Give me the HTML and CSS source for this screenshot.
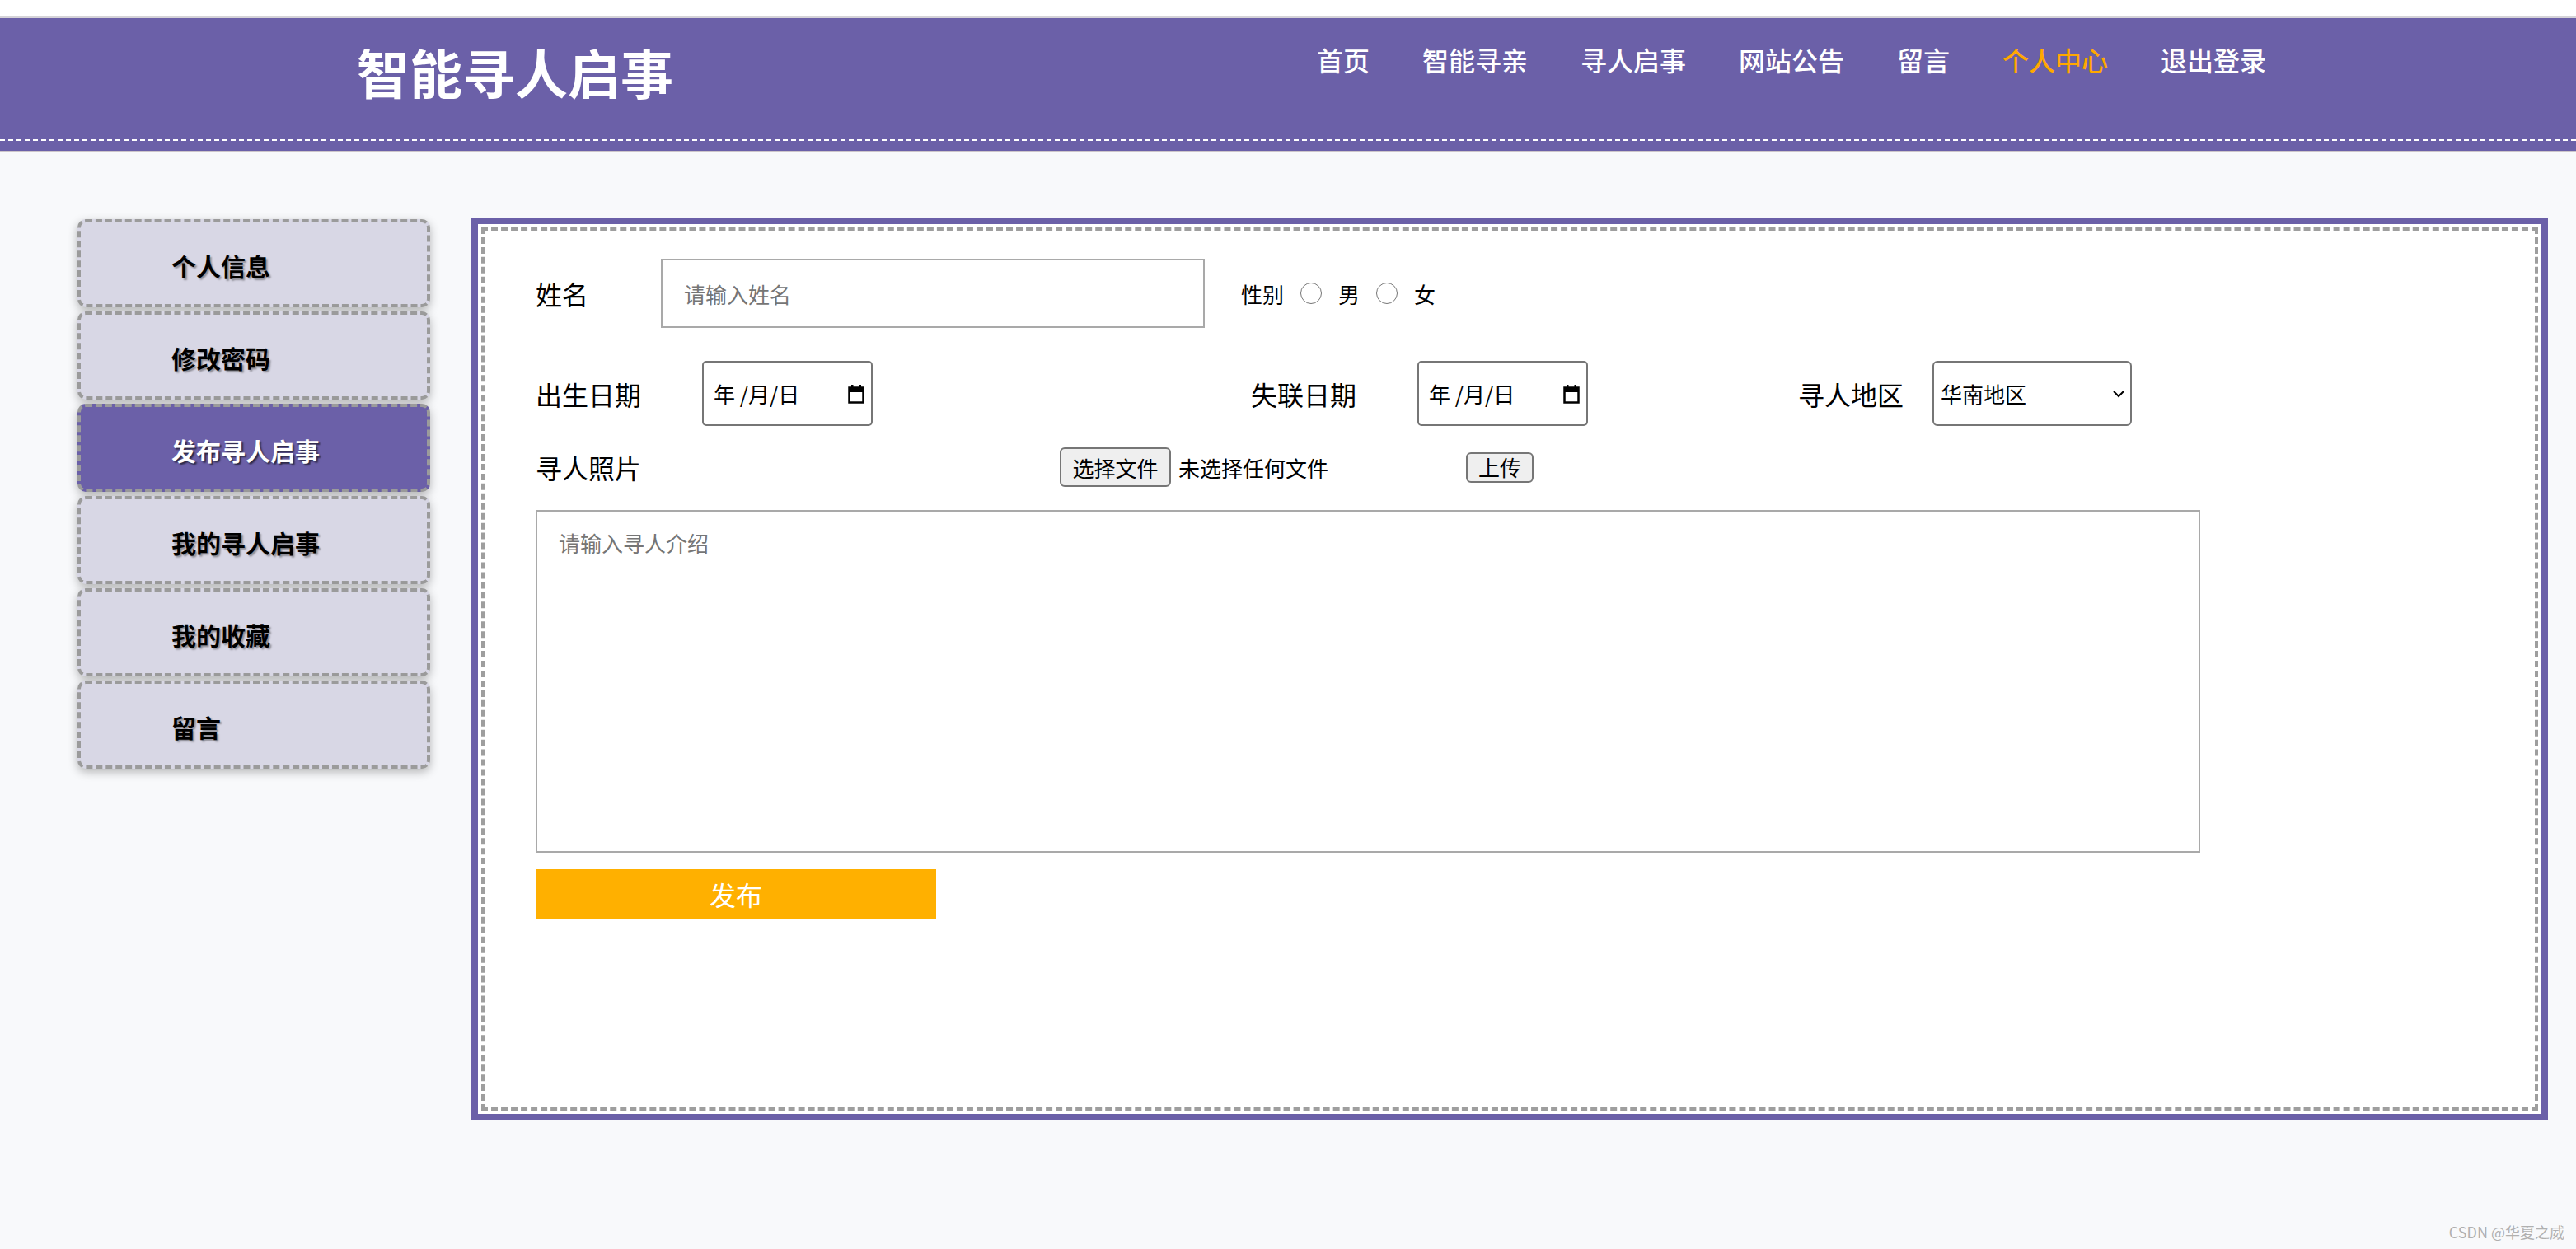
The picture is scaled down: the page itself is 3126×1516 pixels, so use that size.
FILE: index.html
```html
<!DOCTYPE html>
<html lang="zh-CN">
<head>
<meta charset="utf-8">
<title>智能寻人启事</title>
<link rel="stylesheet" href="styles.css">
</head>
<body>
<div class="topbar"></div>
<header class="header">
  <div class="header-inner">
    <h1 class="brand">智能寻人启事</h1>
    <nav class="nav">
      <a href="#">首页</a>
      <a href="#">智能寻亲</a>
      <a href="#">寻人启事</a>
      <a href="#">网站公告</a>
      <a href="#">留言</a>
      <a href="#" class="current">个人中心</a>
      <a href="#">退出登录</a>
    </nav>
  </div>
</header>
<main class="main">
  <aside class="side">
    <a href="#" class="side-item">个人信息</a>
    <a href="#" class="side-item">修改密码</a>
    <a href="#" class="side-item active">发布寻人启事</a>
    <a href="#" class="side-item">我的寻人启事</a>
    <a href="#" class="side-item">我的收藏</a>
    <a href="#" class="side-item">留言</a>
  </aside>
  <section class="panel">
    <div class="panel-inner">
      <div class="row row-name">
        <span class="label label-name">姓名</span>
        <input class="text-input" type="text" placeholder="请输入姓名">
        <div class="gender">
          <span>性别</span>
          <input type="radio" name="sex">
          <span>男</span>
          <input type="radio" name="sex">
          <span>女</span>
        </div>
      </div>
      <div class="row row-date">
        <span class="label label-date">出生日期</span>
        <div class="date-field"><span>年 /月/日</span>
          <svg class="cal" width="20" height="24" viewBox="0 0 20 24"><rect x="1.5" y="4.5" width="17" height="18" fill="none" stroke="#000" stroke-width="2.5"/><rect x="1" y="4" width="18" height="6" fill="#000"/><rect x="4" y="1" width="2.5" height="4" fill="#000"/><rect x="13.5" y="1" width="2.5" height="4" fill="#000"/></svg>
        </div>
        <span class="label label-date gap-lost">失联日期</span>
        <div class="date-field"><span>年 /月/日</span>
          <svg class="cal" width="20" height="24" viewBox="0 0 20 24"><rect x="1.5" y="4.5" width="17" height="18" fill="none" stroke="#000" stroke-width="2.5"/><rect x="1" y="4" width="18" height="6" fill="#000"/><rect x="4" y="1" width="2.5" height="4" fill="#000"/><rect x="13.5" y="1" width="2.5" height="4" fill="#000"/></svg>
        </div>
        <span class="label label-area gap-area">寻人地区</span>
        <div class="select-wrap">
          <select class="select">
            <option>华南地区</option>
            <option>华北地区</option>
            <option>华东地区</option>
          </select>
          <svg class="chev" width="16" height="10" viewBox="0 0 16 10"><path d="M2 2 L8 8 L14 2" fill="none" stroke="#000" stroke-width="2"/></svg>
        </div>
      </div>
      <div class="row row-photo">
        <span class="label label-photo">寻人照片</span>
        <button class="file-btn" type="button">选择文件</button>
        <span class="file-status">未选择任何文件</span>
        <button class="upload-btn" type="button">上传</button>
      </div>
      <textarea class="intro" placeholder="请输入寻人介绍"></textarea>
      <button class="submit" type="button">发布</button>
    </div>
  </section>
</main>
<div class="watermark">CSDN @华夏之威</div>
</body>
</html>
```

FILE: styles.css
```css
html, body {
  margin: 0;
  padding: 0;
}

body {
  position: relative;
  min-height: 100vh;
  background: #f8f9fb;
  font-family: "Noto Sans CJK SC", "Noto Sans", sans-serif;
  color: #000;
}

.topbar {
  height: 20px;
  background: #fff;
}

.header {
  background: #6b60a8;
  border-top: 2px solid #d5d3d8;
  border-bottom: 2px solid #cdc6ca;
  padding-bottom: 12px;
}

.header-inner {
  display: flex;
  align-items: flex-start;
  height: 147px;
  padding-left: 433px;
  border-bottom: 2px dashed #fff;
}

.brand {
  flex: none;
  width: 1165px;
  margin: 0;
  font-size: 64px;
  line-height: 128px;
  font-weight: 700;
  color: #fff;
}

.nav {
  display: flex;
  gap: 64px;
}

.nav a {
  font-size: 32px;
  line-height: 100px;
  font-weight: 500;
  color: #fff;
  text-decoration: none;
}

.nav a.current {
  color: #ffa800;
}

.main {
  display: flex;
  align-items: flex-start;
  gap: 50px;
  padding: 79px 34px 0 94px;
}

.side {
  flex: none;
  width: 428px;
  margin-top: 2px;
}

.side-item {
  display: flex;
  align-items: center;
  box-sizing: border-box;
  height: 107px;
  margin-bottom: 5px;
  padding: 4px 0 0 110px;
  background: #d8d7e5;
  border: 4px dashed #9b9b9b;
  border-radius: 10px;
  box-shadow: 0 4px 12px rgba(0, 0, 0, 0.28);
  font-size: 30px;
  font-weight: 700;
  color: #000;
  text-shadow: 2px 2px 2px rgba(0, 0, 0, 0.35);
  text-decoration: none;
}

.side-item.active {
  background: #6b60a8;
  color: #fff;
  text-shadow: 2px 2px 2px rgba(0, 0, 0, 0.6);
}

.panel {
  flex: 1;
  border: 8px solid #6b60a8;
  padding: 4px;
  background: #fff;
}

.panel-inner {
  box-sizing: border-box;
  height: 1072px;
  border: 4px dashed #9e9e9e;
  padding: 34px 0 0 62px;
}

.row {
  display: flex;
  align-items: center;
}

.label {
  flex: none;
  font-size: 32px;
  color: #000;
}

.row-name {
  height: 84px;
}

.label-name {
  width: 152px;
}

.text-input {
  box-sizing: border-box;
  width: 660px;
  height: 84px;
  padding: 0 26px;
  border: 2px solid #a9a9a9;
  font-family: "Noto Sans CJK SC", sans-serif;
  font-size: 26px;
  outline: none;
}

.text-input::placeholder,
.intro::placeholder {
  color: #757575;
}

.gender {
  display: flex;
  align-items: center;
  margin-left: 44px;
  font-size: 26px;
}

.gender input {
  width: 26px;
  height: 26px;
  margin: 0 20px;
}

.row-date {
  height: 79px;
  margin-top: 40px;
}

.label-date {
  width: 202px;
}

.gap-lost {
  margin-left: 459px;
}

.gap-area {
  margin-left: 255px;
}

.label-area {
  width: 163px;
}

.date-field {
  display: flex;
  align-items: center;
  justify-content: space-between;
  box-sizing: border-box;
  width: 207px;
  height: 79px;
  padding: 0 8px 0 12px;
  border: 2px solid #767676;
  border-radius: 5px;
  background: #fff;
  font-size: 26px;
}

.select-wrap {
  position: relative;
  width: 242px;
  height: 79px;
}

.select {
  -webkit-appearance: none;
  appearance: none;
  box-sizing: border-box;
  width: 100%;
  height: 100%;
  padding: 0 0 0 8px;
  border: 2px solid #767676;
  border-radius: 6px;
  background: #fff;
  font-family: "Noto Sans CJK SC", sans-serif;
  font-size: 26px;
  color: #000;
}

.chev {
  position: absolute;
  right: 8px;
  top: 35px;
  pointer-events: none;
}

.row-photo {
  height: 48px;
  margin-top: 26px;
}

.label-photo {
  width: 636px;
}

.file-btn,
.upload-btn {
  box-sizing: border-box;
  padding: 0;
  border: 2px solid #767676;
  border-radius: 6px;
  background: #efefef;
  font-family: "Noto Sans CJK SC", sans-serif;
  font-size: 26px;
  color: #000;
}

.file-btn {
  width: 135px;
  height: 48px;
}

.file-status {
  margin-left: 9px;
  font-size: 26px;
}

.upload-btn {
  width: 82px;
  height: 37px;
  margin-left: 167px;
  line-height: 1;
}

.intro {
  display: block;
  box-sizing: border-box;
  width: 2020px;
  height: 416px;
  margin-top: 28px;
  padding: 20px 26px;
  border: 2px solid #a9a9a9;
  font-family: "Noto Sans CJK SC", sans-serif;
  font-size: 26px;
  line-height: 36px;
  resize: none;
  outline: none;
}

.submit {
  display: block;
  width: 486px;
  height: 60px;
  margin-top: 20px;
  padding: 0;
  border: 0;
  background: #ffb000;
  color: #fff;
  font-family: "Noto Sans CJK SC", sans-serif;
  font-size: 32px;
}

.watermark {
  position: absolute;
  right: 14px;
  bottom: 8px;
  font-size: 18px;
  color: #b0b0b0;
}
```
